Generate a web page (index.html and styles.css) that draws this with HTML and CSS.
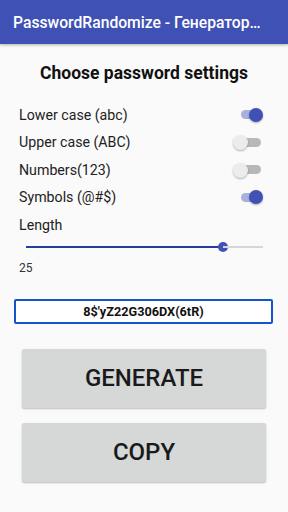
FILE: index.html
```html
<!DOCTYPE html>
<html>
<head>
<meta charset="utf-8">
<link rel="stylesheet" href="styles.css">
</head>
<body>
<header class="toolbar"><span class="toolbar-title">PasswordRandomize - Генератор…</span></header>
<main class="content">
  <h1 class="heading">Choose password settings</h1>
  <div class="options">
    <div class="row"><span class="label">Lower case (abc)</span><span class="switch on"><span class="track"></span><span class="thumb"></span></span></div>
    <div class="row"><span class="label">Upper case (ABC)</span><span class="switch"><span class="track"></span><span class="thumb"></span></span></div>
    <div class="row"><span class="label">Numbers(123)</span><span class="switch"><span class="track"></span><span class="thumb"></span></span></div>
    <div class="row"><span class="label">Symbols (@#$)</span><span class="switch on"><span class="track"></span><span class="thumb"></span></span></div>
    <div class="row"><span class="label">Length</span></div>
  </div>
  <div class="slider">
    <div class="slider-fill" style="width:197px"></div>
    <div class="slider-thumb"></div>
    <div class="slider-rest"></div>
  </div>
  <div class="value">25</div>
  <div class="password">8$'yZ22G306DX(6tR)</div>
  <button class="btn">GENERATE</button>
  <button class="btn">COPY</button>
</main>
</body>
</html>
```

FILE: styles.css
```css
* { box-sizing: border-box; }
html, body { margin: 0; padding: 0; }
body {
  width: 288px;
  height: 512px;
  background: #fafafa;
  font-family: Roboto, "Noto Sans", sans-serif;
  color: #212121;
  overflow: hidden;
}
.toolbar {
  height: 44px;
  background: #3f51b5;
  display: flex;
  align-items: center;
  padding-left: 13px;
  box-shadow: 0 1px 3px rgba(0,0,0,0.3);
  position: relative;
}
.toolbar-title {
  color: #fff;
  font-size: 15.7px;
  font-weight: 500;
  white-space: nowrap;
}
.content {
  display: flex;
  flex-direction: column;
}
.heading {
  margin: 17px 0 0;
  height: 24px;
  line-height: 24px;
  font-size: 17.5px;
  font-weight: 700;
  text-align: center;
  color: #111;
}
.options {
  margin-top: 16px;
  padding: 0 24px 0 19px;
  display: flex;
  flex-direction: column;
}
.row {
  height: 27.5px;
  display: flex;
  align-items: center;
  justify-content: space-between;
}
.label {
  font-size: 14.2px;
  color: #222;
}
.switch {
  position: relative;
  width: 30px;
  height: 16px;
  display: flex;
  align-items: center;
  justify-content: center;
  margin-right: 1px;
}
.track {
  width: 20px;
  height: 9px;
  border-radius: 5px;
  background: #b8b8b8;
  margin-left: 6px;
}
.switch.on .track { background: #a8b1dd; }
.thumb {
  position: absolute;
  left: 0;
  top: 1px;
  width: 15px;
  height: 15px;
  border-radius: 50%;
  background: #ececec;
  box-shadow: 0 1px 2px rgba(0,0,0,0.3);
}
.switch.on .thumb {
  left: 16px;
  width: 14px;
  height: 14px;
  background: #3f51b5;
}
.slider {
  margin: 0 25px 0 26px;
  height: 16px;
  display: flex;
  align-items: center;
}
.slider-fill {
  height: 2px;
  background: #2b3aa0;
}
.slider-thumb {
  width: 10px;
  height: 10px;
  border-radius: 50%;
  background: #3f51b5;
  flex: none;
  margin-left: -5px;
  margin-right: -5px;
}
.slider-rest {
  flex: 1;
  height: 2px;
  background: #d6d6d6;
}
.value {
  margin: 6px 0 0 19px;
  font-size: 12px;
  height: 14px;
  line-height: 14px;
  color: #333;
}
.password {
  margin: 24px 15px 0 14px;
  height: 25px;
  border: 2px solid #1553c9;
  border-radius: 2px;
  background: #fff;
  display: flex;
  align-items: center;
  justify-content: center;
  font-size: 12.7px;
  font-weight: 700;
  color: #111;
}
.btn {
  margin: 25px 22px 0 22px;
  height: 59px;
  border: none;
  border-radius: 2px;
  background: #d6d7d7;
  box-shadow: 0 1px 2px rgba(0,0,0,0.25);
  font-family: Roboto, sans-serif;
  font-size: 24px;
  font-weight: 500;
  color: #1a1a1a;
  padding: 0;
}
.btn + .btn { margin-top: 15px; }
```
